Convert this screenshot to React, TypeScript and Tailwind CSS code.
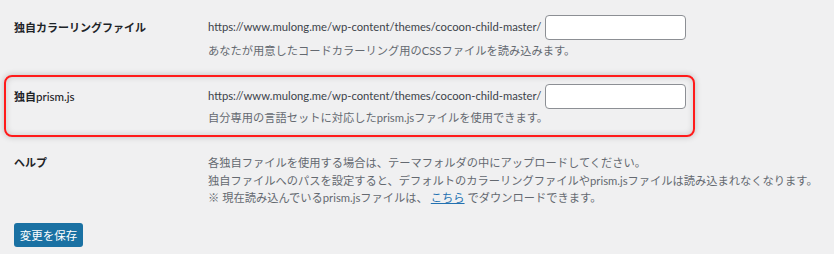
const font = "font-['Lato','Noto_Sans_CJK_JP',sans-serif]"

function UrlField() {
  return (
    <div className="flex h-[25px] items-center gap-[4px]">
      <span className="text-[11.25px] whitespace-nowrap text-[#3c434a]">https://www.mulong.me/wp-content/themes/cocoon-child-master/</span>
      <input
        type="text"
        className="h-[25px] w-[141px] rounded-[4px] border border-[#8c8f94] bg-white px-2 text-[12px] outline-none"
      />
    </div>
  )
}

export default function App() {
  return (
    <div className={`min-h-[254px] w-[834px] bg-[#f0f0f1] px-[4px] pt-[15px] ${font}`}>
      {/* 独自カラーリングファイル */}
      <div className="flex pl-[10px]">
        <div className="w-[194px] text-[11px] leading-[25px] font-bold text-[#1d2327]">独自カラーリングファイル</div>
        <div>
          <UrlField />
          <p className="mt-[2px] text-[11.25px] leading-[18px] text-[#646970]">
            あなたが用意したコードカラーリング用のCSSファイルを読み込みます。
          </p>
        </div>
      </div>

      {/* 独自prism.js */}
      <div className="mt-[15px] flex w-[691px] rounded-[8px] border-2 border-[#ff1a1a] pt-[7px] pb-[8px] pl-[8px] shadow-[0_0_6px_rgba(0,0,0,0.22),inset_0_0_6px_rgba(0,0,0,0.16)]">
        <div className="w-[194px] text-[11px] leading-[25px] font-bold text-[#1d2327]">
          独自<span className="text-[11.5px] font-medium">prism.js</span>
        </div>
        <div>
          <UrlField />
          <p className="text-[11.25px] leading-[18px] text-[#646970]">
            自分専用の言語セットに対応したprism.jsファイルを使用できます。
          </p>
        </div>
      </div>

      {/* ヘルプ */}
      <div className="mt-[17px] flex pl-[10px]">
        <div className="w-[194px] text-[11px] leading-[18px] font-bold text-[#1d2327]">ヘルプ</div>
        <div className="text-[11.25px] leading-[17.5px] whitespace-nowrap text-[#646970]">
          <p>各独自ファイルを使用する場合は、テーマフォルダの中にアップロードしてください。</p>
          <p>独自ファイルへのパスを設定すると、デフォルトのカラーリングファイルやprism.jsファイルは読み込まれなくなります。</p>
          <p>
            ※ 現在読み込んでいるprism.jsファイルは、
            <a href="#" className="mx-[3px] text-[#2271b1] underline">こちら</a>
            でダウンロードできます。
          </p>
        </div>
      </div>

      <div className="mt-[15px] pl-[10px]">
        <button className="h-[24px] w-[69px] rounded-[3px] bg-[#1a71a3] text-[11.5px] text-white">変更を保存</button>
      </div>
    </div>
  )
}
